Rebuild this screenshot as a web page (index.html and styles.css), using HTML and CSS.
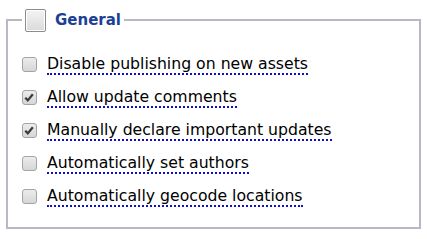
FILE: index.html
```html
<!DOCTYPE html>
<html lang="en">
<head>
    <meta charset="UTF-8">
    <title>General</title>
    <link rel="stylesheet" href="styles.css">
</head>
<body>
<fieldset class="group">
    <legend class="group-title">
        <span class="big-box"></span>
        <span class="title-text">General</span>
    </legend>

    <div class="options">
        <label class="option">
            <span class="box"></span>
            <span class="option-text">Disable publishing on new assets</span>
        </label>
        <label class="option">
            <span class="box checked"><svg viewBox="0 0 15 15" width="15" height="15"><path d="M3.5 7.8 L6.2 10.6 L11.6 4" fill="none" stroke="#3a3a3a" stroke-width="2.4"/></svg></span>
            <span class="option-text">Allow update comments</span>
        </label>
        <label class="option">
            <span class="box checked"><svg viewBox="0 0 15 15" width="15" height="15"><path d="M3.5 7.8 L6.2 10.6 L11.6 4" fill="none" stroke="#3a3a3a" stroke-width="2.4"/></svg></span>
            <span class="option-text">Manually declare important updates</span>
        </label>
        <label class="option">
            <span class="box"></span>
            <span class="option-text">Automatically set authors</span>
        </label>
        <label class="option">
            <span class="box"></span>
            <span class="option-text">Automatically geocode locations</span>
        </label>
    </div>
</fieldset>
</body>
</html>
```

FILE: styles.css
```css
body {
    margin: 0;
    padding: 8px 6px 0 6px;
    font-family: "DejaVu Sans", Verdana, sans-serif;
    background: #fff;
}

.group {
    margin: 0;
    width: 415px;
    height: 221px;
    border: 2px solid #b8b8c6;
    padding: 0 0 0 14px;
    box-sizing: border-box;
}

.group-title {
    display: flex;
    align-items: center;
    padding: 0 3px;
    margin-left: 0;
    height: 24px;
}

.big-box {
    width: 19px;
    height: 21px;
    border: 1px solid #8c8c8c;
    border-radius: 2px;
    background: linear-gradient(#f4f4f4, #dadada);
    box-shadow: inset 0 0 0 1px #fff;
}

.title-text {
    margin-left: 9px;
    font-size: 15px;
    font-weight: bold;
    color: #1d3f94;
}

.options {
    display: flex;
    flex-direction: column;
    gap: 11px;
    margin-top: 21px;
}

.option {
    display: flex;
    align-items: center;
    height: 22px;
}

.box {
    display: flex;
    width: 13px;
    height: 13px;
    border: 1px solid #a4a4a4;
    border-radius: 3px;
    background: linear-gradient(#ececec, #d6d6d6);
}

.box svg {
    margin: -1px 0 0 -1px;
}

.option-text {
    margin-left: 10px;
    font-size: 15.7px;
    color: #000;
    border-bottom: 2px dotted #1010c8;
    line-height: 19px;
}
```
